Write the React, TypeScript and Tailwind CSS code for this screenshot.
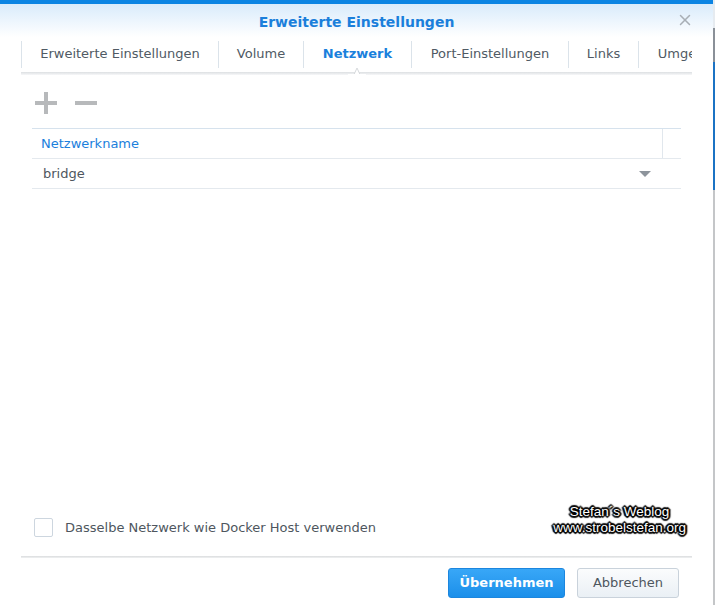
import { X } from "lucide-react";

const tabs = [
  { label: "Erweiterte Einstellungen", w: "w-[197px]" },
  { label: "Volume", w: "w-[85px]" },
  { label: "Netzwerk", w: "w-[108px]", active: true },
  { label: "Port-Einstellungen", w: "w-[157px]" },
  { label: "Links", w: "w-[70px]" },
  { label: "Umgebung", w: "w-[110px]" },
];

const font = "font-['DejaVu_Sans',Verdana,sans-serif]";

export default function App() {
  return (
    <div className={`flex h-[605px] w-[715px] bg-white ${font}`}>
      {/* Dialog */}
      <div className="relative flex w-[713px] flex-col">
        {/* Header */}
        <div className="h-[4px] bg-[#0b84e3]" />
        <div className="relative flex h-[33px] items-center justify-center bg-gradient-to-b from-[#d9ebfb] to-white">
          <h1 className="pt-[3px] text-[14px] font-bold text-[#1b7fdb]">Erweiterte Einstellungen</h1>
          <X className="absolute right-[19px] top-[7px] h-[18px] w-[18px] text-[#a8aeb5]" strokeWidth={2} />
        </div>

        {/* Tabs */}
        <div className="relative ml-[21px] w-[671px]">
          <div className="flex h-[35px] items-center overflow-hidden">
            {tabs.map((t) => (
              <div
                key={t.label}
                className={`flex h-[27px] shrink-0 items-center justify-center border-l border-[#dbe3ea] pb-[1px] text-[13px] ${t.w} ${
                  t.active ? "font-bold text-[#1a80dc]" : "text-[#505a64]"
                }`}
              >
                <span className="whitespace-nowrap">{t.label}</span>
              </div>
            ))}
          </div>
          <div className="h-[3px] bg-gradient-to-b from-[#dcdfe2] to-[#f7f8f9]" />
          {/* active tab notch */}
          <svg className="absolute left-[327px] top-[30px]" width="18" height="8" viewBox="0 0 18 8">
            <path d="M0 7.5 L6 7.5 L9 1 L12 7.5 L18 7.5" fill="white" stroke="#d6d9dc" strokeWidth="1" />
            <rect x="0" y="7" width="18" height="1" fill="white" />
          </svg>
        </div>

        {/* Toolbar */}
        <div className="ml-[35px] mt-[17px] flex items-center gap-[18px]">
          <svg width="22" height="22" viewBox="0 0 22 22">
            <rect x="9" y="0" width="4" height="22" fill="#b7b9bb" />
            <rect x="0" y="9" width="22" height="4" fill="#b7b9bb" />
          </svg>
          <svg width="22" height="22" viewBox="0 0 22 22">
            <rect x="0" y="9" width="22" height="4" fill="#b7b9bb" />
          </svg>
        </div>

        {/* Grid */}
        <div className="ml-[32px] mt-[14px] w-[649px] border-t border-[#d6e2ed]">
          <div className="flex h-[30px] border-b border-[#e4e9ee]">
            <div className="flex flex-1 items-center pl-[9px] text-[13px] text-[#1b80dc]">Netzwerkname</div>
            <div className="w-[19px] border-l border-[#e1e7ed]" />
          </div>
          <div className="flex h-[30px] items-center border-b border-[#e4e9ee] pl-[11px] pr-[30px] text-[13px] text-[#4e565e]">
            <span className="flex-1">bridge</span>
            <svg width="12" height="6" viewBox="0 0 12 6">
              <path d="M0 0 H12 L6 6 Z" fill="#8d949c" />
            </svg>
          </div>
        </div>

        <div className="flex-1" />

        {/* Checkbox row */}
        <div className="relative flex items-center pb-[19px] pl-[34px]">
          <div className="h-[19px] w-[19px] rounded-[2px] border border-[#cdd6df] bg-white" />
          <span className="ml-[12px] text-[13px] text-[#4e565e]">Dasselbe Netzwerk wie Docker Host verwenden</span>
          <div className="absolute right-[27px] top-[-14px] flex flex-col items-center font-['Liberation_Sans',Arial,sans-serif] text-[13.5px] leading-[16px] text-white [text-shadow:0_0_2px_#000,0_0_2px_#000,1px_1px_1px_#000,-1px_-1px_1px_#000,1px_-1px_1px_#000,-1px_1px_1px_#000,2px_0_1px_#000,-2px_0_1px_#000,0_2px_1px_#000,0_-2px_1px_#000]">
            <span>Stefan´s Weblog</span>
            <span>www.strobelstefan.org</span>
          </div>
        </div>

        {/* Footer */}
        <div className="ml-[21px] h-[2px] w-[671px] bg-gradient-to-b from-[#dadcde] to-[#f0f1f2]" />
        <div className="flex h-[47px] items-center justify-end gap-[12px] pr-[34px] pt-[2px]">
          <button className="h-[30px] w-[117px] rounded-[3px] border border-[#1c86de] bg-gradient-to-b from-[#38a7f7] to-[#1a8fea] text-[13px] font-semibold text-white">
            Übernehmen
          </button>
          <button className="h-[30px] w-[102px] rounded-[3px] border border-[#c9d2db] bg-gradient-to-b from-[#fbfcfd] to-[#eaf0f5] text-[13px] text-[#4e565e]">
            Abbrechen
          </button>
        </div>
      </div>

      {/* Edge of window behind */}
      <div className="flex w-[2px] flex-col">
        <div className="h-[28px] bg-[#e6ebf0]" />
        <div className="h-[34px] bg-[#8a9098]" />
        <div className="h-[128px] bg-[#1b73c4]" />
        <div className="flex-1 bg-[#c4c6c8]" />
      </div>
    </div>
  );
}
